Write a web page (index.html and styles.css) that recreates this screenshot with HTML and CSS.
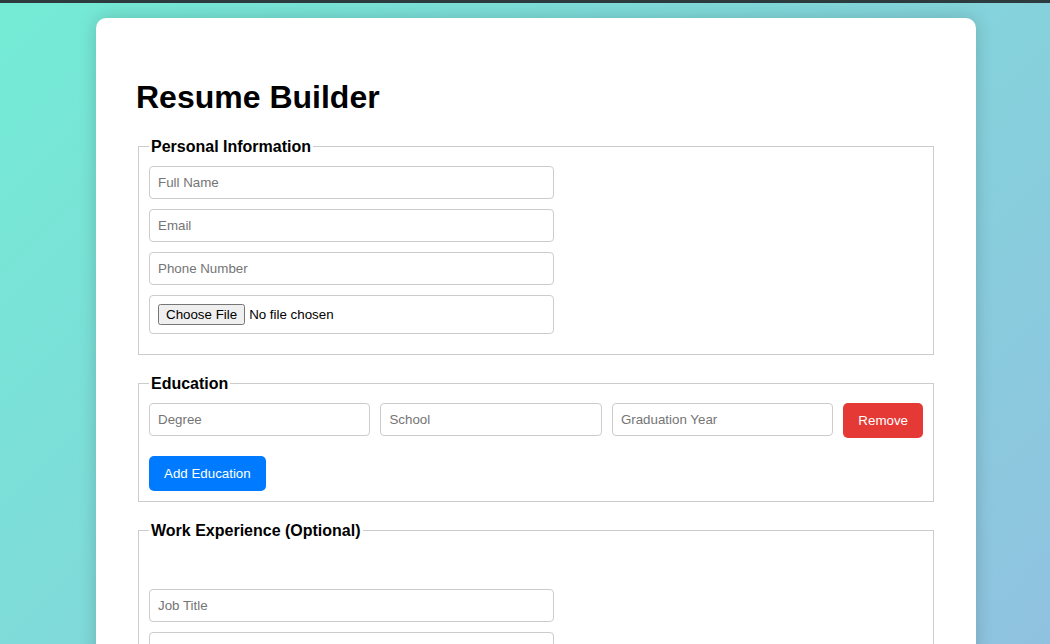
FILE: index.html
```html
<!DOCTYPE html>
<html lang="en">
<head>
<meta charset="utf-8">
<title>Resume Builder</title>
<link rel="stylesheet" href="styles.css">
</head>
<body>
<div class="page">
  <div class="card">
    <h1>Resume Builder</h1>
    <fieldset class="section">
      <legend>Personal Information</legend>
      <input class="field" type="text" placeholder="Full Name">
      <input class="field" type="email" placeholder="Email">
      <input class="field" type="tel" placeholder="Phone Number">
      <input class="field file" type="file">
    </fieldset>
    <fieldset class="section">
      <legend>Education</legend>
      <div class="edu-row">
        <input class="field" type="text" placeholder="Degree">
        <input class="field" type="text" placeholder="School">
        <input class="field" type="text" placeholder="Graduation Year">
        <button class="btn btn-remove" type="button">Remove</button>
      </div>
      <button class="btn btn-add" type="button">Add Education</button>
    </fieldset>
    <fieldset class="section">
      <legend>Work Experience (Optional)</legend>
      <div class="work-spacer"></div>
      <input class="field" type="text" placeholder="Job Title">
      <input class="field" type="text" placeholder="Company">
      <input class="field" type="text" placeholder="Duration">
      <button class="btn btn-add" type="button">Add Work Experience</button>
    </fieldset>
    <fieldset class="section">
      <legend>Skills</legend>
      <input class="field" type="text" placeholder="Skills (comma separated)">
    </fieldset>
  </div>
</div>
</body>
</html>
```
FILE: styles.css
```css
html, body {
  margin: 0;
  padding: 0;
}
body {
  font-family: "Liberation Sans", Arial, sans-serif;
  color: #000;
}
.page {
  border-top: 3px solid #2d3b3e;
  padding: 15px 74px 60px 96px;
  min-height: 1553px;
  box-sizing: border-box;
  background: linear-gradient(135deg, #74ebd5 0%, #9face6 100%);
}
.card {
  width: 880px;
  box-sizing: border-box;
  padding: 40px;
  background: #fff;
  border-radius: 10px;
  box-shadow: 0 0 18px rgba(0, 0, 0, 0.18);
}
h1 {
  font-size: 32px;
  margin: 21.44px 0;
  font-weight: bold;
}
.section {
  margin: 0 2px 20px;
  border: 1px solid #ccc;
  padding: 10px;
}
.section legend {
  font-size: 16px;
  font-weight: bold;
  padding: 0 2px;
}
.field {
  display: block;
  box-sizing: border-box;
  width: 405px;
  padding: 8px;
  margin: 0 0 10px;
  border: 1px solid #ccc;
  border-radius: 4px;
  font-family: "Liberation Sans", Arial, sans-serif;
  font-size: 13.333px;
  color: #000;
  background: #fff;
}
.field::placeholder {
  color: #757575;
}
.edu-row {
  display: flex;
  gap: 10px;
  align-items: flex-start;
  margin-bottom: 10px;
}
.edu-row .field {
  flex: 1;
  width: auto;
  min-width: 0;
}
.btn {
  border: none;
  border-radius: 5px;
  padding: 10px 15px;
  color: #fff;
  font-family: "Liberation Sans", Arial, sans-serif;
  font-size: 13.333px;
  line-height: 15px;
  cursor: pointer;
}
.btn-remove {
  background: #e53935;
  flex: none;
}
.btn-add {
  background: #007bff;
  display: block;
}
.work-spacer {
  height: 29px;
  margin-bottom: 10px;
}
```
